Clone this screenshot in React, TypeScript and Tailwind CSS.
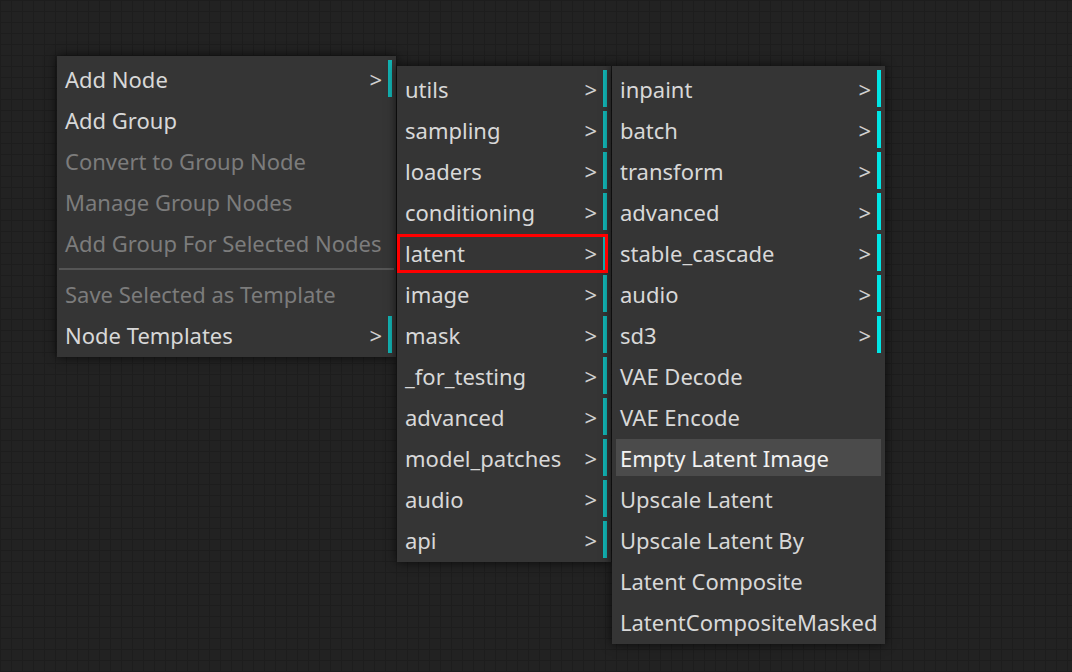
import React from "react";

type Item = { label: string; sub?: boolean; disabled?: boolean; sep?: boolean; active?: boolean };

const menu1: Item[] = [
  { label: "Add Node", sub: true },
  { label: "Add Group" },
  { label: "Convert to Group Node", disabled: true },
  { label: "Manage Group Nodes", disabled: true },
  { label: "Add Group For Selected Nodes", disabled: true },
  { label: "", sep: true },
  { label: "Save Selected as Template", disabled: true },
  { label: "Node Templates", sub: true },
];

const menu2: Item[] = [
  "utils",
  "sampling",
  "loaders",
  "conditioning",
  "latent",
  "image",
  "mask",
  "_for_testing",
  "advanced",
  "model_patches",
  "audio",
  "api",
].map((l) => ({ label: l, sub: true }));

const menu3: Item[] = [
  { label: "inpaint", sub: true },
  { label: "batch", sub: true },
  { label: "transform", sub: true },
  { label: "advanced", sub: true },
  { label: "stable_cascade", sub: true },
  { label: "audio", sub: true },
  { label: "sd3", sub: true },
  { label: "VAE Decode" },
  { label: "VAE Encode" },
  { label: "Empty Latent Image", active: true },
  { label: "Upscale Latent" },
  { label: "Upscale Latent By" },
  { label: "Latent Composite" },
  { label: "LatentCompositeMasked" },
];

function Menu({ items, bright, className }: { items: Item[]; bright?: boolean; className: string }) {
  return (
    <div
      className={
        "absolute flex flex-col bg-[#353535] p-[2px] shadow-[0_0_10px_rgba(0,0,0,0.75)] text-[22px] leading-none " +
        className
      }
      style={{ fontFamily: "Tahoma, 'Noto Sans', 'DejaVu Sans', sans-serif" }}
    >
      {items.map((it, i) =>
        it.sep ? (
          <div key={i} className="mt-[5px] mb-[3px] h-[2px] shrink-0 bg-[#555555]" />
        ) : (
          <div
            key={i}
            className={
              "m-[2px] h-[37px] shrink-0 flex items-center pl-[4px] whitespace-nowrap " +
              (it.active ? "bg-[#4b4b4b] text-[#f2f2f2] " : "") +
              (it.disabled ? "text-[#7c7c7c] " : it.active ? "" : "text-[#d8d8d8] ") +
              (it.sub
                ? bright
                  ? "border-r-[4px] border-[#00e5e5] "
                  : "border-r-[4px] border-[#12b3b3] "
                : "")
            }
          >
            <span className="flex-1">{it.label}</span>
            {it.sub && <span className="mr-[6px] text-[#d0d0d0]">&gt;</span>}
          </div>
        )
      )}
    </div>
  );
}

export default function App() {
  return (
    <div className="relative w-[1072px] h-[672px] overflow-hidden bg-[#222222] bg-[linear-gradient(to_right,#1d1d1d_1px,transparent_1px),linear-gradient(to_bottom,#1d1d1d_1px,transparent_1px)] bg-size-[11px_11px]">
      <Menu items={menu1} className="left-[57px] top-[56px] w-[339px]" />
      <Menu items={menu2} className="left-[397px] top-[66px] w-[214px]" />
      <Menu items={menu3} bright className="left-[612px] top-[66px] w-[273px]" />
      <div className="absolute left-[397px] top-[234px] w-[211px] h-[39px] border-[3px] border-[#ff0000]" />
    </div>
  );
}
